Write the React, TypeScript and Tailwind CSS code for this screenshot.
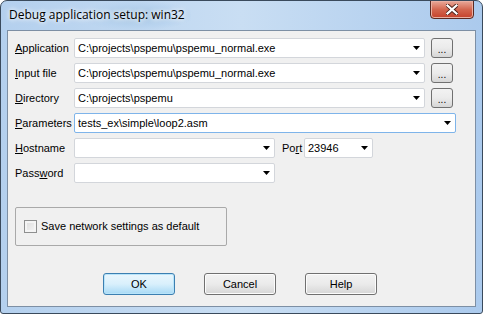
import React from "react";

const FONT = { fontFamily: '"Liberation Sans", Arial, sans-serif' };

function Arrow() {
  return (
    <svg width="7" height="4" viewBox="0 0 7 4" className="shrink-0">
      <path d="M0 0H7L3.5 4Z" fill="#000" />
    </svg>
  );
}

function Combo({ value, width, focused }: { value?: string; width: string; focused?: boolean }) {
  return (
    <div
      className={`${width} h-[20px] flex items-center bg-white border rounded-[2px] pl-[3px] pr-[4px] ${
        focused ? "border-[#7eb4ea]" : "border-[#d3d6db]"
      }`}
    >
      <span className="flex-1 text-[11px] text-black whitespace-nowrap overflow-hidden leading-none">{value}</span>
      <Arrow />
    </div>
  );
}

function Label({ children, w = "w-[59px]" }: { children: React.ReactNode; w?: string }) {
  return <div className={`${w} shrink-0 text-[11px] text-black leading-none`}>{children}</div>;
}

function Browse() {
  return (
    <button className="w-[22px] h-[20px] ml-[6px] border border-[#707070] rounded-[3px] bg-gradient-to-b from-[#f2f2f2] via-[#ebebeb] to-[#d6d6d6] text-[10px] leading-none pt-[4px] text-black">
      ...
    </button>
  );
}

function Btn({ label, def }: { label: string; def?: boolean }) {
  return (
    <button
      className={`w-[72px] h-[22px] rounded-[3px] border text-[11px] text-black ${
        def
          ? "border-[#3c7fb1] bg-gradient-to-b from-[#eaf6fd] via-[#d9f0fc] to-[#a7d9f5] shadow-[inset_0_0_0_1px_#b8e4fa]"
          : "border-[#707070] bg-gradient-to-b from-[#f2f2f2] via-[#ebebeb] to-[#d6d6d6] shadow-[inset_0_0_0_1px_#fcfcfc]"
      }`}
    >
      {label}
    </button>
  );
}

export default function App() {
  return (
    <div className="w-[483px] h-[314px] bg-white" style={FONT}>
      <div className="w-[483px] h-[314px] flex flex-col rounded-t-[7px] rounded-b-[3px] border border-[#3a4a5c] bg-gradient-to-r from-[#b4d0ee] via-[#c9def3] to-[#abcaed] overflow-hidden">
        {/* title bar */}
        <div className="h-[29px] flex items-start relative">
          <div className="absolute left-[80px] top-0 w-[110px] h-[29px] bg-[radial-gradient(ellipse_at_center,#9cc0de_0%,#b6d2ee_55%,transparent_75%)] opacity-70" />
          <div
            className="relative ml-[8px] mt-[6px] text-[12px] text-black leading-[16px]"
            style={{ fontFamily: '"Open Sans", "Liberation Sans", sans-serif', textShadow: "0 0 6px #fff, 0 0 4px #fff" }}
          >
            Debug application setup: win32
          </div>
          <div className="flex-1" />
          <div className="relative mr-[8px] w-[44px] h-[19px] mt-[-1px] rounded-b-[4px] border border-[#5b2a22] bg-gradient-to-b from-[#e9a99a] via-[#d3664f] to-[#c5402a] flex items-center justify-center shadow-[inset_0_0_0_1px_#eab0a3]">
            <svg width="12" height="11" viewBox="0 0 12 11">
              <path d="M1.5 1.5L10.5 9.5M10.5 1.5L1.5 9.5" stroke="#4a2018" strokeWidth="4" strokeLinecap="square" />
              <path d="M1.5 1.5L10.5 9.5M10.5 1.5L1.5 9.5" stroke="#ffffff" strokeWidth="2.2" strokeLinecap="square" />
            </svg>
          </div>
        </div>

        {/* client area */}
        <div className="mx-[6px] h-[277px] border border-[#7d8fa4] bg-[#f0f0f0] pt-[7px] pl-[7px] flex flex-col">
          <div className="flex items-center h-[20px]">
            <Label><u>A</u>pplication</Label>
            <Combo value="C:\projects\pspemu\pspemu_normal.exe" width="w-[351px]" />
            <Browse />
          </div>
          <div className="flex items-center h-[20px] mt-[5px]">
            <Label><u>I</u>nput file</Label>
            <Combo value="C:\projects\pspemu\pspemu_normal.exe" width="w-[351px]" />
            <Browse />
          </div>
          <div className="flex items-center h-[20px] mt-[5px]">
            <Label><u>D</u>irectory</Label>
            <Combo value="C:\projects\pspemu" width="w-[351px]" />
            <Browse />
          </div>
          <div className="flex items-center h-[20px] mt-[5px]">
            <Label><u>P</u>arameters</Label>
            <Combo value="tests_ex\simple\loop2.asm" width="w-[382px]" focused />
          </div>
          <div className="flex items-center h-[20px] mt-[5px]">
            <Label><u>H</u>ostname</Label>
            <Combo width="w-[201px]" />
            <div className="w-[22px] ml-[7px] text-[11px] leading-none">Po<u>r</u>t</div>
            <Combo value="23946" width="w-[69px]" />
          </div>
          <div className="flex items-center h-[20px] mt-[5px]">
            <Label>Pass<u>w</u>ord</Label>
            <Combo width="w-[201px]" />
          </div>

          <div className="mt-[24px] w-[212px] h-[39px] border border-[#a9a9a9] rounded-[2px] flex items-center pl-[8px]">
            <div className="w-[13px] h-[13px] border border-[#8e8f8f] bg-gradient-to-br from-[#dcdcdc] to-[#f6f6f6] shadow-[inset_0_0_0_2px_#f4f4f4]" />
            <span className="ml-[4px] text-[11px] leading-none">Save network settings as default</span>
          </div>

          <div className="mt-[27px] flex pl-[88px] gap-[29px]">
            <Btn label="OK" def />
            <Btn label="Cancel" />
            <Btn label="Help" />
          </div>
        </div>
      </div>
    </div>
  );
}
